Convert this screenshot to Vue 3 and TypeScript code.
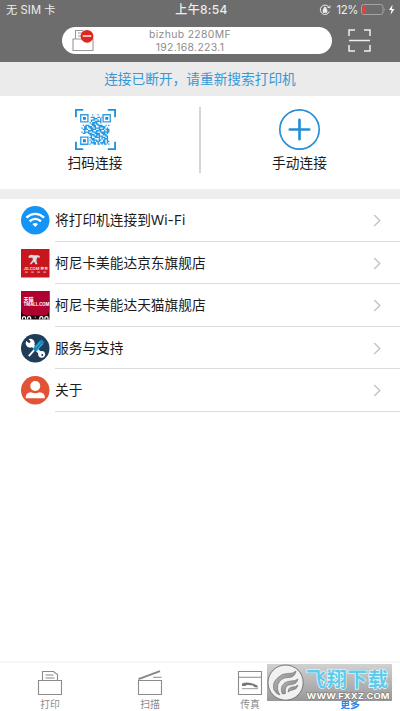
<script setup lang="ts">
type RowIcon = 'wifi' | 'jd' | 'tmall' | 'service' | 'about'
interface MenuRow { label: string; icon: RowIcon }
const rows: MenuRow[] = [
  { label: '将打印机连接到Wi-Fi', icon: 'wifi' },
  { label: '柯尼卡美能达京东旗舰店', icon: 'jd' },
  { label: '柯尼卡美能达天猫旗舰店', icon: 'tmall' },
  { label: '服务与支持', icon: 'service' },
  { label: '关于', icon: 'about' },
]

// Modules of the code symbol; the three finder squares are drawn separately.
const qr: string[] = [
  '.......0.1.0.1.0.......',
  '.......00000000........',
  '........1110011.1......',
  '.........01110.1.......',
  '........111001.1.......',
  '........10011111.......',
  '.......1.1111001.......',
  '........1110110........',
  '..1.1110011101111001.1.',
  '...11011101100111110...',
  '.1.1100111011110011.1..',
  '..11110011110011110111.',
  '...1001111001111001.11.',
  '.1.1111001111001111111.',
  '..11..1110011110111.1..',
  '.......1111011100111...',
  '........10111.1110.11..',
  '.......11001111.11101..',
  '........11100.101.111..',
  '.......1.1111.11011.1..',
  '........1.101110011.11.',
  '........1111.1.1111.1..',
  '.......1..11.11.1.11.1.',
]
const modules: string = qr
  .map((line, y) => [...line].map((c, x) => (c === '1' ? `M${x} ${y}h1v1h-1z` : '')).join(''))
  .join('')
</script>

<template>
  <div class="screen">
    <header class="header">
      <div class="status">
        <span class="carrier">无 SIM 卡</span>
        <span class="clock">上午8:54</span>
        <span class="power">
          <svg class="lock" viewBox="0 0 12 12">
            <path d="M9.8 3A4.7 4.7 0 1 0 10.4 7.5M8.3 3.1l2.5.8.2-2.4" fill="none" stroke="#eee" />
            <path d="M4 5.500h4v3H4zM4.800 5.500V4.300a1.200 1.200 0 0 1 2.400 0v1.200" fill="#eee" stroke="#eee" stroke-width=".6" />
          </svg>
          <span class="percent">12%</span>
          <svg class="battery" viewBox="0 0 34 12">
            <rect x=".5" y=".5" width="21.5" height="10" rx="2.2" fill="none" stroke="#a5a5a5" />
            <path d="M3 1.5h2v8H3a1.5 1.5 0 0 1-1.5-1.5V3A1.5 1.5 0 0 1 3 1.5z" fill="#ef3c35" />
            <path d="M23.5 3.7q1.3 1.8 0 3.6z" fill="#bbb" />
            <path d="M31.5.8 28 6h2.5l-1 4.8L33.5 5H31z" fill="#fff" />
          </svg>
        </span>
      </div>
      <div class="device-row">
        <div class="device">
          <svg class="device-icon" viewBox="0 0 24 24">
            <path d="M4.5 10V1.5h8M2 10h20v11.5H2zM7 4h4M7 7h4" fill="none" stroke="#999" stroke-width="1.1" />
            <circle cx="16" cy="7.3" r="6.4" fill="#df251e" />
            <path d="M11.7 7h8.6" stroke="#fff" stroke-width="1.4" />
          </svg>
          <div class="device-name"><span>bizhub 2280MF</span><span>192.168.223.1</span></div>
        </div>
        <svg class="scan" viewBox="0 0 23 23">
          <path d="M1 7V1h6M16 1h6v6M1 16v6h6M16 22h6v-6M1 11.5h21" fill="none" stroke="#eee" stroke-width="1.5" />
        </svg>
      </div>
    </header>

    <div class="notice">连接已断开，请重新搜索打印机</div>

    <section class="actions">
      <div class="action scan-action">
        <svg class="action-icon" viewBox="0 0 40 40">
          <path d="M.9 8V.9H8M32 .9h7.1V8M.9 32v7.1H8M32 39.1h7.1V32" fill="none" stroke="#1e91df" stroke-width="1.8" />
          <g fill="none" stroke="#359de2" stroke-width="1.3">
            <path d="M5.6 5.6h7v7h-7zM27.4 5.6h7v7h-7zM5.6 27.4h7v7h-7z" />
          </g>
          <path d="M7.8 7.8h2.8v2.8H7.8zM29.6 7.8h2.8v2.8h-2.8zM7.8 29.6h2.8v2.8H7.8z" fill="#1688da" />
          <path :d="modules" transform="translate(5 5) scale(1.3)" fill="#2698e2" />
        </svg>
        <span>扫码连接</span>
      </div>
      <div class="divider"></div>
      <div class="action manual-action">
        <svg class="action-icon" viewBox="0 0 40 40">
          <circle cx="20" cy="20" r="19.2" fill="none" stroke="#248fd6" stroke-width="1.6" />
          <path d="M20 10.5v19M10.5 20h19" stroke="#248fd6" stroke-width="2.6" stroke-linecap="round" />
        </svg>
        <span>手动连接</span>
      </div>
    </section>

    <main class="list">
      <div v-for="row in rows" :key="row.icon" class="row">
        <svg class="row-icon" viewBox="0 0 28 28">
          <template v-if="row.icon === 'wifi'">
            <circle cx="14" cy="14" r="14" fill="#1594f5" />
            <g fill="none" stroke="#fff" stroke-width="2.3">
              <path d="M5.3 11.4q8.7-7.3 17.4 0M8.4 15q5.6-4.7 11.2 0" />
            </g>
            <path d="M11.2 17.8q2.8-2 5.6 0L14 20.7z" fill="#fff" />
          </template>
          <template v-else-if="row.icon === 'jd'">
            <path d="M0 0h28v28H0z" fill="#c8161e" />
            <path d="M7.5 6.8q2.5-1.8 5.2-.7l4.3.1q1.8.5 1.6 2.4l-2.4-.6-1 2.6q-.2 2.4 1 4.4h-1.8l-1.8-2.7-2.4 2.7H8.5l3.3-4.6-.8-2-3.4.4z" fill="#ddd" />
            <text x="2.5" y="20.4" class="jd-name">JD.COM 京东</text>
            <path d="M4 22.7h2.5M10 22.7h2.5M16 22.7h2.5M22 22.7h2.5" stroke="#e9a4a4" stroke-width="1.2" />
          </template>
          <template v-else-if="row.icon === 'tmall'">
            <path d="M0 0h28v28H0z" fill="#17070b" />
            <path d="M0 0h28v17q0 7-6 7H6q-6 0-6-7z" fill="#b00030" />
            <text x="2.5" y="10.3" class="tm-cn">天猫</text>
            <text x="2.5" y="15.2" class="tm-en">TMALL.COM</text>
            <path d="M1.5 28v-1.7q0-1.2 1.5-1.2t1.5 1.2V28M6.5 28v-1.7q0-1.2 1.5-1.2t1.5 1.2V28M18.5 28v-1.7q0-1.2 1.5-1.2t1.5 1.2V28M23.5 28v-1.7q0-1.2 1.5-1.2t1.5 1.2V28M13.5 25.8h1" fill="none" stroke="#fff" stroke-width="1.2" />
          </template>
          <template v-else-if="row.icon === 'service'">
            <circle cx="14" cy="14" r="14" fill="#203d57" />
            <path d="M10.5 10.5 20 20" stroke="#fff" stroke-width="3" />
            <circle cx="9" cy="9" r="4.4" fill="#fff" />
            <path d="m4 6 4 3 1.5-1.5L6.5 3.5z" fill="#203d57" />
            <circle cx="20.3" cy="20" r="3.4" fill="#fff" />
            <circle cx="20.9" cy="20.6" r="1" fill="#203d57" />
            <path d="m7.7 21.8 6-7" stroke="#fff" stroke-width="1.8" />
            <path d="m14.6 14.4 5.4-6" stroke="#1687bd" stroke-width="5" stroke-linecap="round" />
            <path d="m14 13.4 5-5.5M16 15.3l5-5.5" stroke="#57b9df" stroke-width=".8" />
          </template>
          <template v-else>
            <circle cx="14" cy="14" r="14" fill="#e15334" />
            <circle cx="14" cy="9.8" r="4.9" fill="#fff" />
            <path d="M4.5 21.8q0-5.8 5.4-5.9 4.1 2.1 8.2 0 5.4.1 5.4 5.9z" fill="#fff" />
          </template>
        </svg>
        <div class="row-body">
          <span>{{ row.label }}</span>
          <svg class="chevron" viewBox="0 0 8 14"><path d="m1 1 6 6-6 6" fill="none" stroke="#c3c3c6" stroke-width="1.5" /></svg>
        </div>
      </div>
    </main>

    <nav class="tabs">
      <div class="tab">
        <svg class="tab-icon" viewBox="0 0 26 26">
          <path d="M1.5 10.5h23v14h-23zM5.5 10.5v-9h11l4 3v6M8.5 5h8M8.5 8h9" fill="none" stroke="#8b8b8b" stroke-width="1.1" />
        </svg>
        <span>打印</span>
      </div>
      <div class="tab">
        <svg class="tab-icon" viewBox="0 0 26 26">
          <path d="M1.5 10.5h23v14h-23zM16 7.3h8.5" fill="none" stroke="#8b8b8b" stroke-width="1.1" />
          <path d="m1.5 9.2 21.5-8" stroke="#858585" stroke-width="1.9" />
        </svg>
        <span>扫描</span>
      </div>
      <div class="tab">
        <svg class="tab-icon" viewBox="0 0 26 26">
          <path d="M1.5 1.5h23v23h-23zM1.5 7.3h23" fill="none" stroke="#8b8b8b" stroke-width="1.1" />
          <path d="M5 16v-2.4q4-2 9-.6l6 2.2 1.2 2.3-3.5-.2-2-1.7q-3-1-6-.6L8.2 16z" fill="#777" />
          <path d="M5 18.7h16" stroke="#999" />
        </svg>
        <span>传真</span>
      </div>
      <div class="tab active"><span>更多</span></div>
    </nav>

    <svg class="watermark" viewBox="0 0 125 38">
      <defs>
        <linearGradient id="plate" x1="0" y1="0" x2="0" y2="1">
          <stop offset="0" stop-color="#d1d1d1" /><stop offset="1" stop-color="#989898" />
        </linearGradient>
        <linearGradient id="metal" x1="0" y1="0" x2="1" y2="1">
          <stop offset="0" stop-color="#bbb" /><stop offset="1" stop-color="#777" />
        </linearGradient>
      </defs>
      <path d="M0 0h125v37H0z" fill="url(#plate)" />
      <circle cx="18.6" cy="18.6" r="17.6" fill="#f1f1f1" stroke="#777" />
      <g fill="url(#metal)" stroke="#777" stroke-width=".7">
        <path d="M7 26q-2-7 3-11.5Q15 9 21 9.5q5 .3 8-2.5-1 6-7 6.5-6-.3-9.5 4-2.5 3-2 7 .5 4 2.500 6.500-4-1-6-5z" />
        <path d="M15 29q-2-6 2-9.500 3-2.500 7-2.500 4 .2 7-2-1 5-6.500 5.500-4 0-5.500 2.500-1.500 2.500-.5 6.500-2 .8-3.500 0z" />
        <path d="M21 28q0-4.500 4-5 3.500.2 6-2-1 4.500-5.500 5-2 0-4.500 2z" />
      </g>
      <text x="39" y="22.8" textLength="82" class="wm-cn">飞翔下载</text>
      <text x="39.5" y="34.6" textLength="83" lengthAdjust="spacingAndGlyphs" class="wm-url">WWW.FXXZ.COM</text>
    </svg>
  </div>
</template>

<style>
body { background: #fff; }
</style>

<style scoped>
.screen { position: relative; width: 400px; height: 711px; display: flex; flex-direction: column; overflow: hidden; background: #fff; color: #1b1b1b; font-family: Inter, "Noto Sans CJK SC", sans-serif; font-size: 13.7px; }
svg { display: block; flex: none; overflow: visible; }
.header { height: 62px; background: #6d6d6d; color: #eee; }
.status { height: 20px; padding: 0 5px 0 6px; display: grid; grid-template-columns: 1fr auto 1fr; align-items: center; font-size: 11.2px; line-height: 20px; }
.carrier { letter-spacing: .1px; }
.clock { font-weight: 500; font-size: 12px; letter-spacing: .3px; position: relative; left: 1px; }
.power { display: flex; justify-content: flex-end; align-items: center; }
.lock { width: 12px; height: 12px; margin-right: 6px; }
.percent { font-size: 11.3px; letter-spacing: -.4px; margin-right: 3px; }
.battery { width: 34px; height: 12px; }
.device-row { display: flex; align-items: center; padding: 7px 0 0 62px; }
.device { position: relative; width: 270px; height: 27px; border-radius: 14px; background: #fff; color: #8c8c8c; }
.device-icon { position: absolute; left: 8.5px; top: 2px; width: 24px; height: 24px; }
.device-name { height: 27px; display: flex; flex-direction: column; align-items: center; font-size: 10.4px; line-height: 13.2px; letter-spacing: .35px; padding: 1px 14px 0 0; box-sizing: border-box; }
.scan { width: 23px; height: 23px; margin-left: 16px; }
.notice { height: 34px; flex: none; background: #ebebeb; color: #3798d5; display: flex; align-items: center; justify-content: center; line-height: 34px; }
.actions { height: 93px; flex: none; display: grid; grid-template-columns: 199px 2px 199px; border-bottom: 10px solid #eee; }
.action { box-sizing: border-box; display: flex; flex-direction: column; align-items: center; padding-top: 13px; line-height: 20px; gap: 3px; }
.scan-action { padding-right: 9px; }
.manual-action { padding-right: 2px; }
.action-icon { width: 41px; height: 41px; }
.divider { width: 2px; height: 66px; margin-top: 11px; background: #d5d5d5; }
.row { height: 42.55px; display: flex; padding-left: 21px; align-items: center; box-sizing: border-box; }
.row-icon { width: 28.5px; height: 28.5px; margin-right: 5.5px; }
.row-body { flex: 1; height: 100%; box-sizing: border-box; display: flex; align-items: center; justify-content: space-between; border-bottom: 1px solid #dcdcdc; padding-right: 19px; }
.row-body > span { line-height: 20px; padding-top: .8px; }
.chevron { width: 8px; height: 13px; margin-top: 2px; }
.jd-name { fill: #f5dcdc; font: bold 3.9px/1 Inter, "Noto Sans CJK SC", sans-serif; }
.tm-cn { fill: #fff; font: bold 5px/1 "Noto Sans CJK SC", sans-serif; }
.tm-en { fill: #fff; font: bold 4.1px/1 Inter, sans-serif; }
.tabs { height: 48px; flex: none; margin-top: auto; display: grid; grid-template-columns: repeat(4, 1fr); box-shadow: 0 -1px 2px #eee; }
.tab { display: flex; flex-direction: column; align-items: center; justify-content: flex-end; color: #8c8c8c; font-size: 9.8px; line-height: 13px; gap: 2px; }
.tab-icon { width: 26px; height: 26px; }
.active { color: #2389ec; font-weight: 700; }
.watermark { position: absolute; left: 267px; top: 663.5px; width: 125px; height: 38px; }
.wm-cn { font: bold 20px "Noto Sans CJK SC", sans-serif; fill: #5dccec; stroke: #f4fcff; stroke-width: 1.2; paint-order: stroke; }
.wm-url { font: bold 8px Inter, sans-serif; fill: #fff; stroke: #777; stroke-width: 1; paint-order: stroke; }
</style>
